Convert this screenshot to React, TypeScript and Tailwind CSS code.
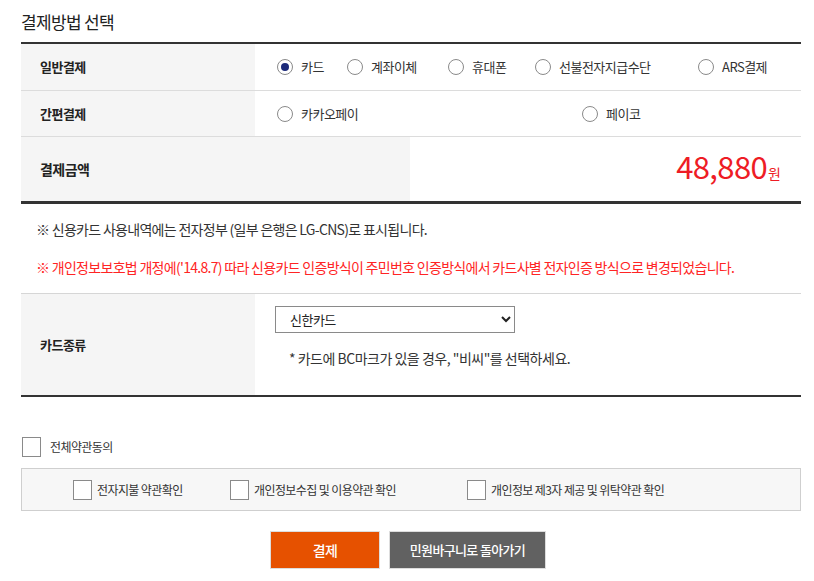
import { useState } from 'react'

const font = { fontFamily: '"Noto Sans CJK KR", "Noto Sans", sans-serif' }

function Radio({ checked, label, onClick, className }: { checked?: boolean; label: string; onClick?: () => void; className?: string }) {
  return (
    <label onClick={onClick} className={`flex items-center gap-2 cursor-pointer ${className ?? ''}`}>
      <span className="w-4 h-4 rounded-full border border-[#8a8a8a] bg-white flex items-center justify-center shrink-0">
        {checked && <span className="w-2 h-2 rounded-full bg-[#1c2a7a]" />}
      </span>
      <span className="text-[13px] text-[#333] tracking-[-0.04em]">{label}</span>
    </label>
  )
}

function Check({ label, gap = 'gap-[5px]' }: { label: string; gap?: string }) {
  return (
    <label className={`flex items-center ${gap}`}>
      <span className="w-[19px] h-[20px] border border-[#8a8a8a] bg-white shrink-0" />
      <span className="text-[12px] text-[#333] tracking-[-0.05em]">{label}</span>
    </label>
  )
}

export default function App() {
  const [method, setMethod] = useState('카드')

  const general = [
    { label: '카드', w: 'w-[70px]' },
    { label: '계좌이체', w: 'w-[101px]' },
    { label: '휴대폰', w: 'w-[87px]' },
    { label: '선불전자지급수단', w: 'w-[163px]' },
    { label: 'ARS결제', w: 'w-[90px]' },
  ]

  return (
    <div className="bg-white w-[814px] min-h-[581px] pl-[21px] pr-[13px] pt-[9px]" style={font}>
      {/* Title */}
      <h2 className="text-[17px] text-[#222] tracking-[-0.04em] h-[33px]">결제방법 선택</h2>

      {/* Method table */}
      <div className="border-t-2 border-[#333] border-b-[3px] border-b-[#333]">
        <div className="flex h-[47px] border-b border-[#dcdcdc]">
          <div className="w-[234px] bg-[#f5f5f5] flex items-center pl-[19px] text-[13px] font-bold text-[#222] tracking-[-0.04em]">
            일반결제
          </div>
          <div className="flex items-center pl-[22px]">
            {general.map((g) => (
              <Radio key={g.label} className={g.w} label={g.label} checked={method === g.label} onClick={() => setMethod(g.label)} />
            ))}
          </div>
        </div>
        <div className="flex h-[46px] border-b border-[#dcdcdc]">
          <div className="w-[234px] bg-[#f5f5f5] flex items-center pl-[19px] text-[13px] font-bold text-[#222] tracking-[-0.04em]">
            간편결제
          </div>
          <div className="flex items-center pl-[22px]">
            <Radio className="w-[305px]" label="카카오페이" checked={method === '카카오페이'} onClick={() => setMethod('카카오페이')} />
            <Radio label="페이코" checked={method === '페이코'} onClick={() => setMethod('페이코')} />
          </div>
        </div>
        <div className="flex h-[64px]">
          <div className="w-[389px] bg-[#f5f5f5] flex items-center pl-[19px] text-[14px] font-bold text-[#222] tracking-[-0.04em]">
            결제금액
          </div>
          <div className="flex-1 flex items-baseline justify-end pr-[20px] pt-[13px] text-[#ee1c25]">
            <span className="text-[31px] leading-none tracking-[-0.02em]">48,880</span>
            <span className="text-[14px] leading-none ml-[1px]">원</span>
          </div>
        </div>
      </div>

      {/* Notices */}
      <div className="pl-[15px] pt-[15px] pb-[16px] flex flex-col gap-[18px] text-[14px] tracking-[-0.05em]">
        <p className="text-[#333] leading-5">※ 신용카드 사용내역에는 전자정부 (일부 은행은 LG-CNS)로 표시됩니다.</p>
        <p className="text-[#ff2424] leading-5">※ 개인정보보호법 개정에('14.8.7) 따라 신용카드 인증방식이 주민번호 인증방식에서 카드사별 전자인증 방식으로 변경되었습니다.</p>
      </div>

      {/* Card type */}
      <div className="flex h-[104px] border-t border-[#d6d6d6] border-b-2 border-b-[#333]">
        <div className="w-[234px] bg-[#f5f5f5] flex items-center pl-[19px] text-[13px] font-bold text-[#222] tracking-[-0.04em]">
          카드종류
        </div>
        <div className="flex flex-col pl-[20px] pt-[12px]">
          <select
            defaultValue="신한카드"
            className="w-[240px] h-[27px] border border-[#8a8a8a] text-[13px] text-[#222] pl-[10px] bg-white tracking-[-0.04em]"
            style={font}
          >
            <option>신한카드</option>
            <option>비씨</option>
            <option>국민카드</option>
            <option>삼성카드</option>
            <option>현대카드</option>
            <option>롯데카드</option>
          </select>
          <p className="pl-[14px] pt-[15px] text-[14px] text-[#333] tracking-[-0.035em]">
            * 카드에 BC마크가 있을 경우, "비씨"를 선택하세요.
          </p>
        </div>
      </div>

      {/* Agreements */}
      <div className="pt-[40px] pl-px">
        <Check label="전체약관동의" gap="gap-[9px]" />
      </div>
      <div className="mt-[11px] h-[43px] border border-[#cfcfcf] bg-[#f7f7f7] flex items-center pl-[51px]">
        <div className="w-[157px]"><Check label="전자지불 약관확인" /></div>
        <div className="w-[237px]"><Check label="개인정보수집 및 이용약관 확인" /></div>
        <Check label="개인정보 제3자 제공 및 위탁약관 확인" />
      </div>

      {/* Buttons */}
      <div className="flex justify-center gap-[9px] mt-[20px] pr-[6px]">
        <button className="w-[110px] h-[38px] bg-[#e65100] border border-[#dddddd] text-white text-[14px] font-medium tracking-[-0.04em]">
          결제
        </button>
        <button className="w-[157px] h-[38px] bg-[#616161] border border-[#dddddd] text-white text-[13px] font-medium tracking-[-0.05em]">
          민원바구니로 돌아가기
        </button>
      </div>
    </div>
  )
}
